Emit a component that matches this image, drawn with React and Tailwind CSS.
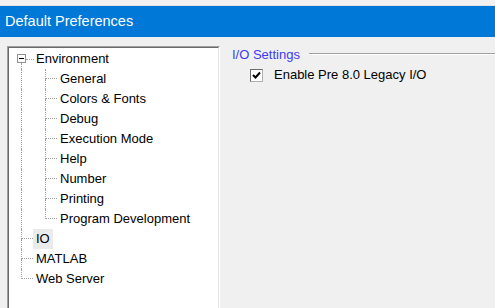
import React from "react";

const font = { fontFamily: '"Liberation Sans", Arial, sans-serif' };
const dot = "border-dotted border-[#a0a0a0]";

function Connector({ last }) {
  return (
    <div className="w-[12px] h-[20px] flex flex-col shrink-0">
      <div className={"h-[10px] border-l border-b " + dot} />
      <div className={"h-[10px] " + (last ? "" : "border-l " + dot)} />
    </div>
  );
}

export default function App() {
  const children = [
    "General",
    "Colors & Fonts",
    "Debug",
    "Execution Mode",
    "Help",
    "Number",
    "Printing",
    "Program Development",
  ];
  const roots = ["IO", "MATLAB", "Web Server"];
  return (
    <div
      className="w-[495px] h-[308px] overflow-hidden bg-[#f0f0f0] text-black"
      style={font}
    >
      <div className="h-[6px] bg-[#f2f2f2] border-b border-[#e2e2e2]" />
      <div className="h-[31px] bg-[#0078d7] text-white text-[14.5px] leading-[31px] pl-[5px]">
        Default Preferences
      </div>
      <div className="flex pt-[9px] pl-[7px] h-[271px]">
        <div className="w-[213px] shrink-0 border-t border-l border-[#a0a0a0] border-r border-r-white">
          <div className="h-[300px] border-t border-l border-[#696969] border-r border-r-[#e3e3e3] bg-white pt-[1px] text-[13px] leading-[20px]">
            <div className="flex h-[20px] pl-[8px]">
              <div className="w-[9px] flex flex-col shrink-0">
                <div className="h-[5px]" />
                <div className="w-[9px] h-[9px] border border-[#919191] bg-white flex items-center justify-center">
                  <div className="w-[5px] h-[1px] bg-black" />
                </div>
                <div className={"h-[6px] ml-[4px] border-l " + dot} />
              </div>
              <div className={"w-[8px] self-center border-t " + dot} />
              <span className="ml-[2px]">Environment</span>
            </div>
            {children.map((c, i) => (
              <div key={c} className="flex h-[20px] pl-[12px]">
                <div className={"w-[24px] h-[20px] shrink-0 border-l " + dot} />
                <Connector last={i === children.length - 1} />
                <span className="ml-[3px] whitespace-nowrap">{c}</span>
              </div>
            ))}
            {roots.map((r, i) => (
              <div key={r} className="flex h-[20px] pl-[12px]">
                <Connector last={i === roots.length - 1} />
                <span
                  className={
                    "px-[3px] whitespace-nowrap " +
                    (r === "IO" ? "bg-[#ebebeb]" : "")
                  }
                >
                  {r}
                </span>
              </div>
            ))}
          </div>
        </div>
        <div className="flex-1 pl-[12px] pt-[1px] text-[13px]">
          <div className="flex items-center h-[16px]">
            <span className="text-[#3c3cf5] leading-[16px]">I/O Settings</span>
            <div className="flex-1 ml-[9px] mt-[-3px] border-t border-[#a0a0a0] border-b border-b-white" />
          </div>
          <div className="flex items-center mt-[4px] ml-[18px] h-[16px]">
            <div className="w-[13px] h-[13px] border border-t-[#6d6d6d] border-l-[#6d6d6d] border-r-[#b0b0b0] border-b-[#b0b0b0] bg-white flex items-center justify-center">
              <svg width="9" height="9" viewBox="0 0 9 9">
                <path
                  d="M1 4 L3.5 6.5 L8 1.5"
                  fill="none"
                  stroke="black"
                  strokeWidth="2"
                />
              </svg>
            </div>
            <span className="ml-[11px] leading-[16px]">
              Enable Pre 8.0 Legacy I/O
            </span>
          </div>
        </div>
      </div>
    </div>
  );
}
